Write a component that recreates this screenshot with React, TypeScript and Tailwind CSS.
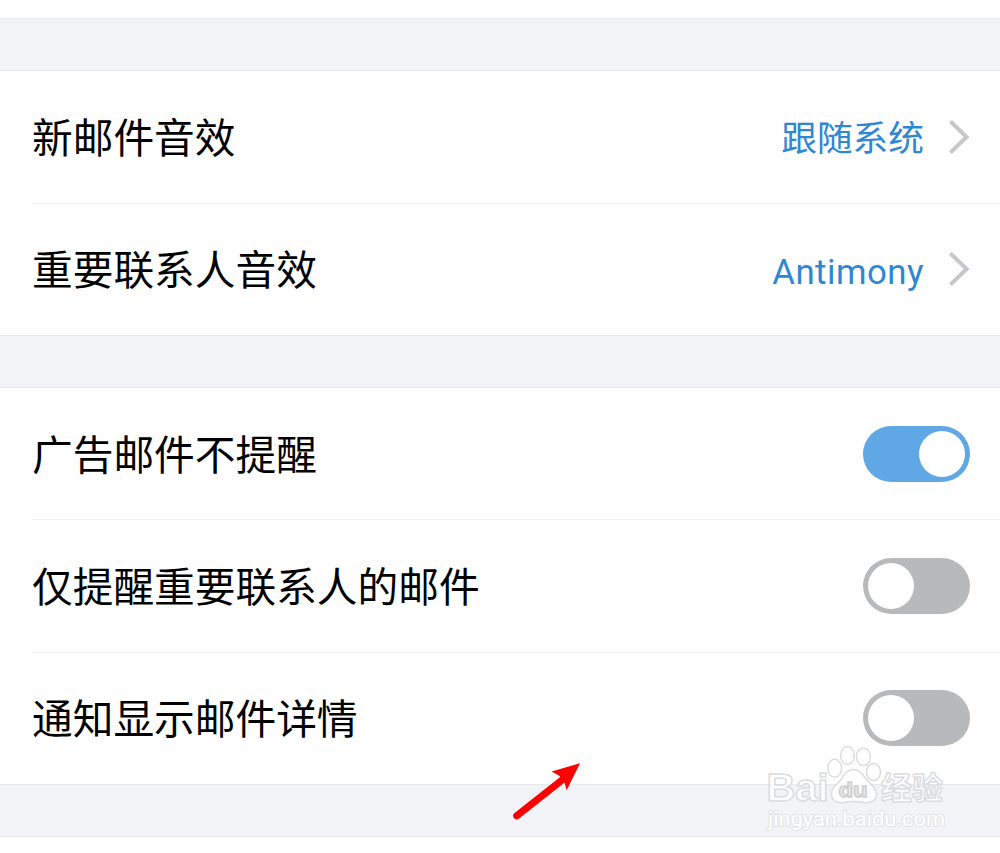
import React, { useState } from "react";

interface ValueRowProps {
    label: string;
    value: string;
    latin?: boolean;
}

interface SwitchRowProps {
    label: string;
    defaultOn?: boolean;
}

const Chevron: React.FC = () => (
    <svg width="22" height="36" viewBox="0 0 22 36" fill="none" className="ml-[25px] shrink-0">
        <path d="M1.4 2.4 L17.6 18 L1.4 33.6" stroke="#c7c7cb" strokeWidth="4" />
    </svg>
);

const ValueRow: React.FC<ValueRowProps> = ({ label, value, latin = false }) => (
    <button className="flex w-full flex-1 items-center pr-[29px] text-left">
        <span className="grow pt-[5px] text-[40.7px] leading-none text-black">{label}</span>
        <span
            className={`leading-none text-[#2f87d3] ${
                latin ? "pt-1.5 text-[34.8px] tracking-[0.5px]" : "pt-1.5 text-[35.7px]"
            }`}
        >
            {value}
        </span>
        <Chevron />
    </button>
);

const SwitchRow: React.FC<SwitchRowProps> = ({ label, defaultOn = false }) => {
    const [on, setOn] = useState(defaultOn);

    return (
        <div className="flex w-full flex-1 items-center pr-[30px]">
            <span className="grow pt-[5px] text-[40.7px] leading-none text-black">{label}</span>
            <button
                role="switch"
                aria-checked={on}
                onClick={() => setOn(!on)}
                className={`flex h-14 w-[107px] items-center rounded-full px-[5px] ${
                    on ? "justify-end bg-[#60a7e6]" : "justify-start bg-[#b8b9bb]"
                }`}
            >
                <span className="size-[46px] rounded-full bg-white" />
            </button>
        </div>
    );
};

const Divider: React.FC = () => <div className="h-px shrink-0 bg-[#f1f1f3]" />;

const Gap: React.FC = () => (
    <div className="h-[53px] shrink-0 border-y border-[#e9e9eb] bg-[#f2f3f7]" />
);

const Arrow: React.FC = () => (
    <svg width="70" height="60" viewBox="0 0 70 60" className="absolute left-[512px] top-[761px]">
        <path d="M4.8 54.8 L52 17.5" stroke="#fe0000" strokeWidth="7.2" strokeLinecap="round" />
        <path d="M68 2.3 L39.5 10.5 L47.3 14.7 L52.3 20.7 L54.7 29.3 Z" fill="#fe0000" />
    </svg>
);

const Watermark: React.FC = () => (
    <svg
        width="190"
        height="94"
        viewBox="0 0 190 94"
        className="pointer-events-none absolute left-[762px] top-[740px]"
        fill="#ffffff"
        fillOpacity="0.75"
        stroke="#dcdddf"
        strokeWidth="1.5"
        strokeLinejoin="round"
    >
        <ellipse cx="72.7" cy="28.3" rx="7" ry="9" />
        <ellipse cx="85.5" cy="15.5" rx="6.8" ry="9" />
        <ellipse cx="101.4" cy="16.7" rx="7" ry="8.8" />
        <ellipse cx="111.5" cy="32" rx="7" ry="8.6" />
        <path d="M91.5 29.5 C97 29.5 101 34 104 39 C107 43.5 114 46 114.5 54 C115 60 109 63.5 102 62.5 C95 61 89 61 82 62.5 C75 63.5 69 61 69.5 53 C70 46 76 44 79.5 39 C82 34 86 29.5 91.5 29.5 Z" />
        <text
            x="4.5"
            y="61"
            fontFamily="Liberation Sans, sans-serif"
            fontWeight="700"
            fontSize="39"
            textLength="62"
            lengthAdjust="spacingAndGlyphs"
        >
            Bai
        </text>
        <text
            x="76.5"
            y="57"
            fontFamily="Liberation Sans, sans-serif"
            fontWeight="700"
            fontSize="19.5"
            fill="#e9eaec"
            stroke="#cfd0d2"
            textLength="29"
            lengthAdjust="spacingAndGlyphs"
        >
            du
        </text>
        <text x="119" y="59" fontFamily="Noto Sans CJK SC, sans-serif" fontWeight="700" fontSize="31">
            经验
        </text>
        <text
            x="6"
            y="85.5"
            fontFamily="Roboto, sans-serif"
            fontWeight="400"
            fontSize="20"
            textLength="177"
            lengthAdjust="spacingAndGlyphs"
            stroke="#e3e4e6"
            strokeWidth="2"
            paintOrder="stroke"
            fillOpacity="1"
        >
            jingyan.baidu.com
        </text>
    </svg>
);

const App: React.FC = () => (
    <main className="relative flex h-[853px] w-[1000px] flex-col overflow-hidden bg-[#fefefe] font-['Roboto','Noto_Sans_CJK_SC',sans-serif]">
        <div className="h-[18px] shrink-0" />
        <Gap />
        <section className="flex h-[264px] shrink-0 flex-col pl-8">
            <ValueRow label="新邮件音效" value="跟随系统" />
            <Divider />
            <ValueRow label="重要联系人音效" value="Antimony" latin />
        </section>
        <Gap />
        <section className="flex h-[396px] shrink-0 flex-col pl-8">
            <SwitchRow label="广告邮件不提醒" defaultOn />
            <Divider />
            <SwitchRow label="仅提醒重要联系人的邮件" />
            <Divider />
            <SwitchRow label="通知显示邮件详情" />
        </section>
        <Gap />
        <Arrow />
        <Watermark />
    </main>
);

export default App;
